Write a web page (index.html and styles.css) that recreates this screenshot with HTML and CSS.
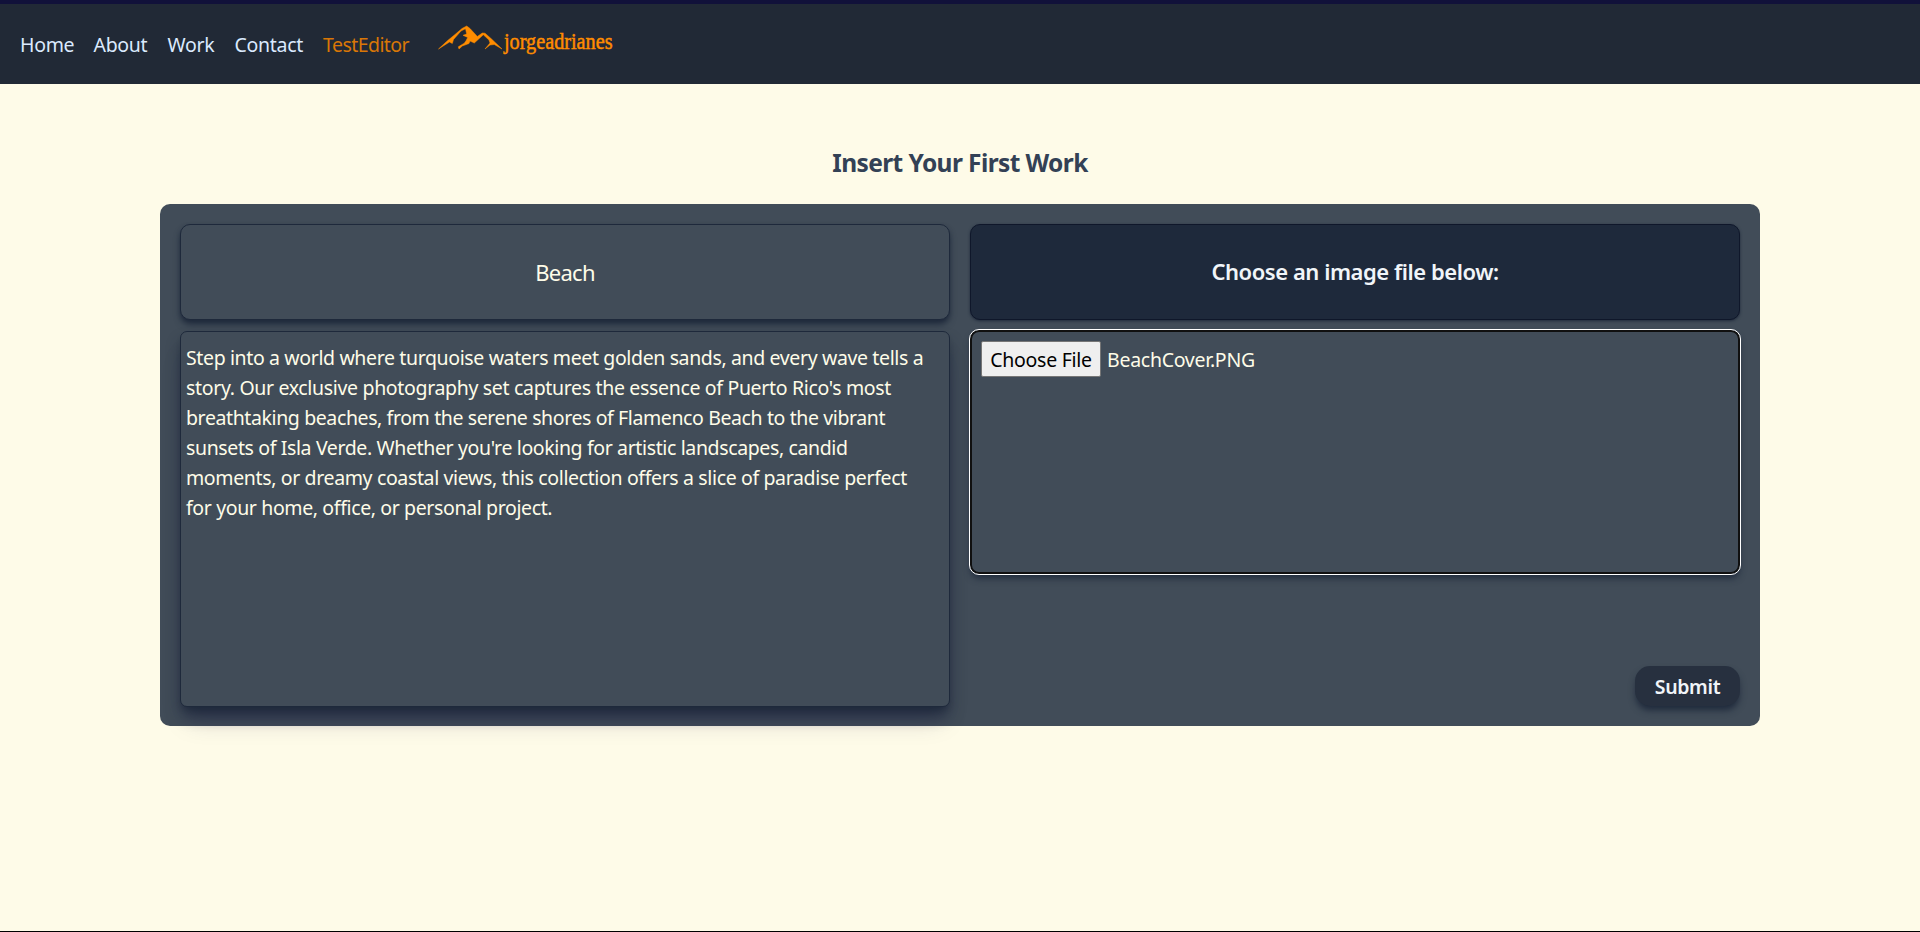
FILE: index.html
```html
<!DOCTYPE html>
<html lang="en">
<head>
<meta charset="utf-8">
<title>TestEditor</title>
<link rel="stylesheet" href="styles.css">
</head>
<body>
<nav class="nav">
  <a class="link home">Home</a>
  <a class="link about">About</a>
  <a class="link work">Work</a>
  <a class="link contact">Contact</a>
  <a class="link editor">TestEditor</a>
  <svg class="logo" width="190" height="44" viewBox="435 18 190 44">
    <path fill="#ff8c00" stroke="#ff8c00" stroke-width=".5" d="M438.500 49L447.700 40.500L455 34.500L462 28.500L466.700 26L470 28.500L477.300 36.500L482.300 33L485 33.200L491 38.500L502 49L494.300 44.500L490 45L485 49L490 43L489 40L483.300 34.800L474.300 43L470 41L469 43.500L462.300 46L459 49L458.300 46.800L464.300 43.200L466 40.700L467.700 37.500L463 35.300L466.700 34L465.500 28.700L461 31L453.500 39.500L452.300 43.500L449.500 42Z"/>
    <text class="logo-text" x="504" y="48.500" textLength="108.500" lengthAdjust="spacingAndGlyphs">jorgeadrianes</text>
  </svg>
</nav>
<main class="main">
  <h1 class="heading"><span>Insert Your First Work</span></h1>
  <form class="panel">
    <div class="column">
      <div class="field title"><span>Beach</span></div>
      <div class="field description">
        <div class="l1">Step into a world where turquoise waters meet golden sands, and every wave tells a</div>
        <div class="l2">story. Our exclusive photography set captures the essence of Puerto Rico's most</div>
        <div class="l3">breathtaking beaches, from the serene shores of Flamenco Beach to the vibrant</div>
        <div class="l4">sunsets of Isla Verde. Whether you're looking for artistic landscapes, candid</div>
        <div class="l5">moments, or dreamy coastal views, this collection offers a slice of paradise perfect</div>
        <div class="l6">for your home, office, or personal project.</div>
      </div>
    </div>
    <div class="column">
      <div class="field prompt"><span>Choose an image file below:</span></div>
      <div class="field file"><span class="choose"><span>Choose File</span></span><span class="filename">BeachCover.PNG</span></div>
      <button class="submit" type="button"><span>Submit</span></button>
    </div>
  </form>
</main>
</body>
</html>
```
FILE: styles.css
```css
* { box-sizing: border-box; }
body {
  margin: 0;
  height: 932px;
  display: flex;
  flex-direction: column;
  overflow: hidden;
  background: #fefbe8;
  border-bottom: 1px solid #000;
  font-family: "Noto Sans", sans-serif;
  font-size: 19.5px;
  line-height: 30px;
  white-space: nowrap;
}
.nav {
  height: 84px;
  flex: none;
  display: flex;
  align-items: center;
  gap: 20px;
  padding: 2px 20px 0;
  background: #212936;
  border-top: 4px solid #11113a;
  color: #dbeafe;
}
.link { letter-spacing: -0.3px; }
.home { width: 53.5px; }
.about { width: 54px; }
.work { width: 47px; }
.contact { width: 68.5px; }
.editor { width: 88px; color: #d97706; letter-spacing: -0.55px; }
.logo { flex: none; margin: -10px 0 0 4px; }
.logo-text { font: 23px "Liberation Serif", serif; fill: #ff8c00; stroke: #ff8c00; stroke-width: .5px; }
.main { display: flex; flex-direction: column; align-items: center; padding-top: 60px; }
.heading { margin: 0 0 22px; font-size: 24.5px; line-height: 38px; font-weight: 700; color: #334155; letter-spacing: -0.6px; }
.panel {
  width: 1600px;
  height: 522px;
  display: grid;
  grid-template-columns: repeat(2, minmax(0, 1fr));
  gap: 20px;
  padding: 20px;
  border-radius: 10px;
  background: #414c58;
}
.column { display: flex; flex-direction: column; gap: 10px; color: #fefce8; }
.field { border: 1px solid #1e293b; border-radius: 10px; background: #414c58; }
.title, .prompt {
  height: 96px;
  display: flex;
  align-items: center;
  justify-content: center;
  font-size: 22px;
}
.title { box-shadow: 0 5px 7px -1px #1e293b, 0 2px 5px -2px #1e293b; letter-spacing: -0.7px; }
.description {
  height: 376px;
  flex: none;
  margin: 1px 0 -1px;
  padding: 11px 5px;
  border-radius: 7px;
  letter-spacing: -0.37px;
  box-shadow: 0 10px 15px -3px #1e293b, 0 4px 6px -4px #1e293b, 0 20px 25px -10px rgba(30, 10, 80, .25);
}
.l2 { letter-spacing: -0.33px; }
.l3 { letter-spacing: -0.39px; }
.l5 { letter-spacing: -0.36px; }
.prompt { padding-bottom: 2px; background: #1e293b; border-color: #0f172a; font-weight: 600; color: #f1f5f9; box-shadow: 0 1px 3px #1e293b; letter-spacing: -0.45px; }
.file {
  height: 244px;
  display: flex;
  align-items: flex-start;
  gap: 6px;
  padding: 9px;
  border: 2px solid #101010;
  border-radius: 9px;
  outline: 1px solid #fff;
  box-shadow: 0 5px 7px -1px #1e293b;
  letter-spacing: -0.27px;
}
.choose {
  width: 120px;
  height: 36px;
  display: flex;
  align-items: center;
  justify-content: center;
  padding-top: 1px;
  background: #efefef;
  border: 1px solid #767676;
  border-radius: 2px;
  color: #000;
}
.filename { line-height: 37px; }
.submit {
  width: 105px;
  height: 40px;
  margin: auto 0 0 auto;
  padding: 1px 0 0;
  border: 0;
  border-radius: 15px;
  background: #27303f;
  box-shadow: 0 5px 7px -1px #1e293b;
  font: 600 19.5px/39px "Noto Sans", sans-serif;
  letter-spacing: -0.35px;
  color: #f1f5f9;
}
```
